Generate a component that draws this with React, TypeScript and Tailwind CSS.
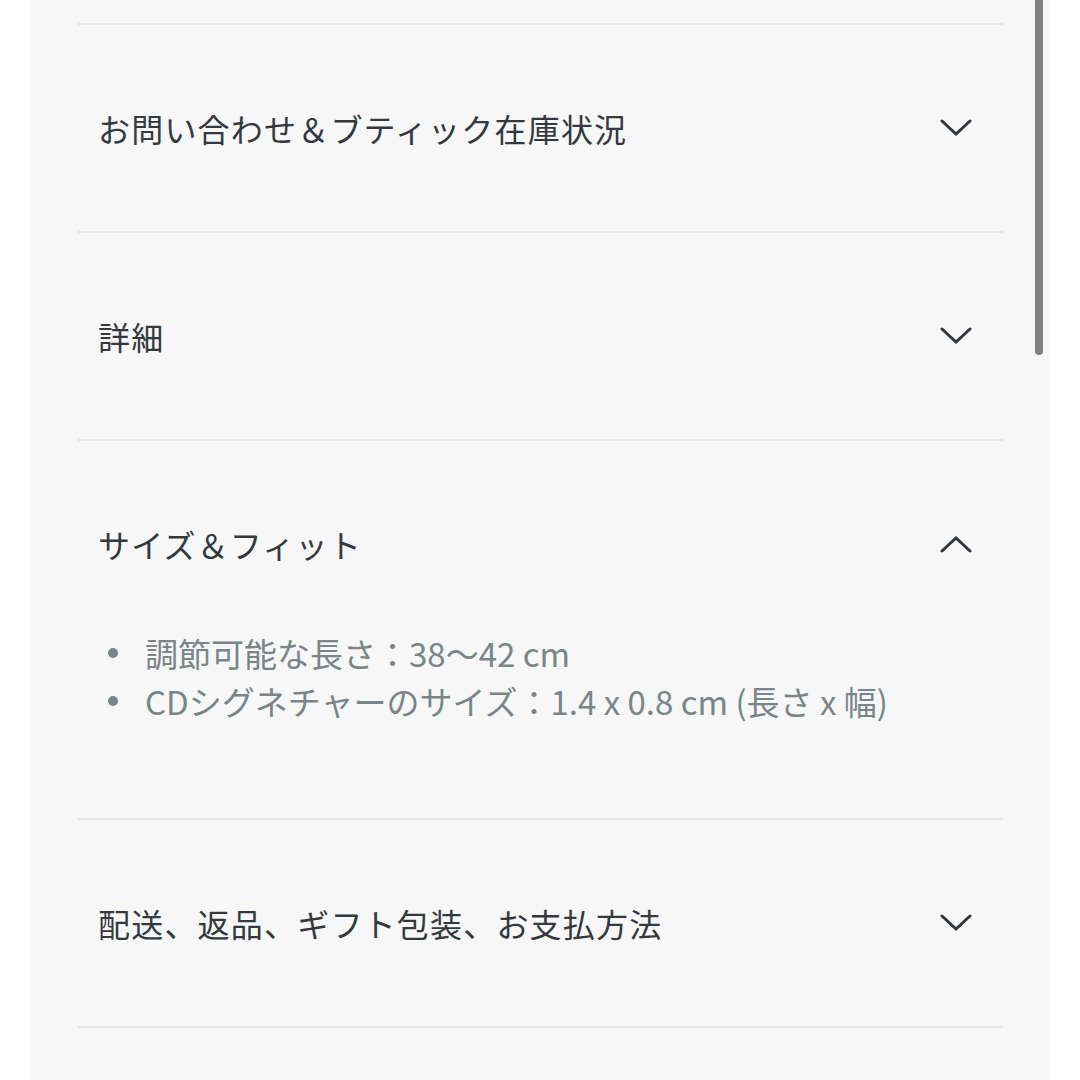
const sections = [
  { title: 'お問い合わせ＆ブティック在庫状況', open: false },
  { title: '詳細', open: false },
  {
    title: 'サイズ＆フィット',
    open: true,
    items: ['調節可能な長さ：38〜42 cm', 'CDシグネチャーのサイズ：1.4 x 0.8 cm (長さ x 幅)'],
  },
  { title: '配送、返品、ギフト包装、お支払方法', open: false },
]

function Chevron({ up }: { up?: boolean }) {
  return (
    <svg width="32" height="18" viewBox="0 0 32 18" fill="none" className="shrink-0">
      <polyline
        points={up ? '2,16 16,3 30,16' : '2,2 16,15 30,2'}
        stroke="#30363b"
        strokeWidth="3"
        strokeLinecap="round"
        strokeLinejoin="miter"
      />
    </svg>
  )
}

export default function App() {
  return (
    <div
      className="relative h-[1080px] w-[1080px] overflow-hidden bg-white"
      style={{ fontFamily: '"Noto Sans CJK JP", "Noto Sans", sans-serif' }}
    >
      <div className="ml-[31px] h-full w-[1018px] bg-[#f7f7f7] pl-[47px] pr-[46px] pt-[23px]">
        {sections.map((s) => (
          <div key={s.title} className="border-t-2 border-[#e6e6e6]">
            {s.open ? (
              <>
                <div className="flex items-center justify-between pl-[20px] pr-[31px] pt-[88px] pb-[70px]">
                  <span className="text-[32px] leading-[30px] tracking-[1.2px] text-[#33393e]">{s.title}</span>
                  <Chevron up />
                </div>
                <ul className="flex flex-col pb-[93px] pl-[30px]">
                  {s.items?.map((it) => (
                    <li key={it} className="flex items-center text-[33px] leading-[48px] text-[#7a8588]">
                      <span className="mr-[27px] h-[10px] w-[10px] shrink-0 rounded-full bg-[#7a8588]" />
                      {it}
                    </li>
                  ))}
                </ul>
              </>
            ) : (
              <div className="flex items-center justify-between pl-[20px] pr-[31px] py-[88px]">
                <span className="text-[32px] leading-[30px] tracking-[1.2px] text-[#33393e]">{s.title}</span>
                <Chevron />
              </div>
            )}
          </div>
        ))}
        <div className="border-t-2 border-[#e6e6e6]" />
      </div>
      <div className="absolute left-[1035px] top-0 h-[355px] w-[8px] rounded-b-full bg-[#808080]" />
    </div>
  )
}
